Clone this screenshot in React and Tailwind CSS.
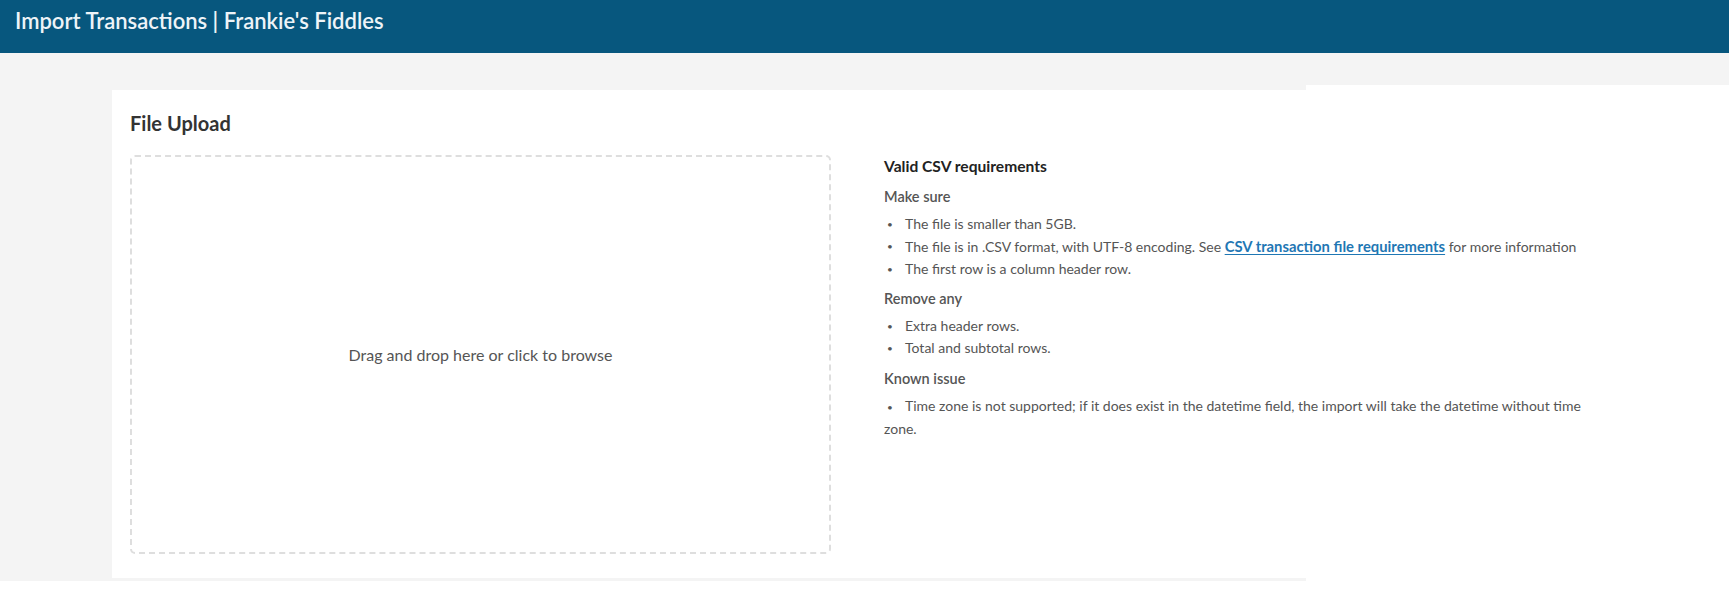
const lato = { fontFamily: "Lato, 'Open Sans', Arial, sans-serif" };

function Bullet({ children }) {
  return (
    <li className="flex items-start leading-[22px]">
      <span className="w-[21px] shrink-0 pl-[3px] text-[10px] leading-[22px] text-[#555]">•</span>
      <span>{children}</span>
    </li>
  );
}

function Requirements() {
  return (
    <div className="relative z-10 pt-px text-[14px] text-[#555]">
      <h3 className="text-[15.6px] font-bold leading-[20px] text-[#222]">Valid CSV requirements</h3>

      <h4 className="mt-[11px] text-[14.5px] font-semibold leading-[20px] text-[#555]">Make sure</h4>
      <ul className="mt-[6px]">
        <Bullet>The file is smaller than 5GB.</Bullet>
        <Bullet>
          The file is in .CSV format, with UTF-8 encoding. See{" "}
          <a href="#" className="text-[14.8px] font-bold text-[#1f77b4] underline underline-offset-2">
            CSV transaction file requirements
          </a>{" "}
          for more information
        </Bullet>
        <Bullet>The first row is a column header row.</Bullet>
      </ul>

      <h4 className="mt-[9px] text-[14.5px] font-semibold leading-[20px] text-[#555]">Remove any</h4>
      <ul className="mt-[6px]">
        <Bullet>Extra header rows.</Bullet>
        <Bullet>Total and subtotal rows.</Bullet>
      </ul>

      <h4 className="mt-[10px] text-[14.5px] font-semibold leading-[20px] text-[#555]">Known issue</h4>
      <ul className="mt-[6px]">
        <li className="leading-[22px]">
          <span className="inline-block w-[21px] pl-[3px] text-[10px] text-[#555]">•</span>
          Time zone is not supported; if it does exist in the datetime field, the import will take the datetime without time zone.
        </li>
      </ul>
    </div>
  );
}

export default function App() {
  return (
    <div className="relative min-h-[608px] bg-white" style={lato}>
      <header className="h-[53px] bg-[#07577e] px-[15px] pt-[8px]">
        <h1 className="text-[22px] font-semibold leading-[26px] text-[#eef4f8]">
          Import Transactions | Frankie's Fiddles
        </h1>
      </header>

      <main className="bg-[#f4f4f4] px-[112px] pt-[37px] pb-[3px]">
        <section className="bg-white px-[18px] pt-[19px] pb-[24px]">
          <h2 className="mb-[18px] text-[20px] font-bold leading-[28px] text-[#333]">File Upload</h2>
          <div className="grid grid-cols-[701px_708px] gap-[53px]">
            <div className="flex h-[399px] cursor-pointer items-center justify-center rounded-[5px] border-2 border-dashed border-[#dedede]">
              <span className="text-[16px] text-[#555]">Drag and drop here or click to browse</span>
            </div>
            <Requirements />
          </div>
        </section>
      </main>

      {/* white patch over the right edge, as in the capture; text stays on top */}
      <div className="absolute top-[85px] right-0 bottom-0 left-[1306px] bg-white" />
    </div>
  );
}
